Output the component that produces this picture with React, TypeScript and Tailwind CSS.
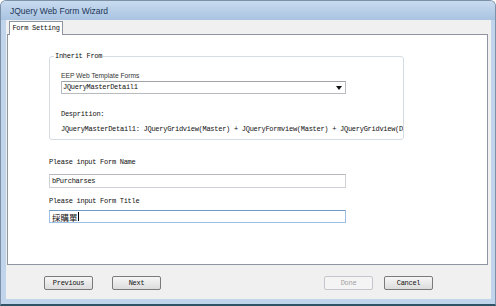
import React from 'react'

const mono = "font-['Liberation_Mono','DejaVu_Sans_Mono',monospace] text-[7px] tracking-[-0.27px] leading-[9px] text-[#111]"

function WizButton({ label, disabled }: { label: string; disabled?: boolean }) {
  return (
    <div
      className={
        'w-[49px] h-[14px] flex items-center justify-center rounded-[2px] border ' +
        (disabled
          ? 'border-[#c3c7cb] bg-[#f4f4f4] text-[#a3a3a3]'
          : 'border-[#7a7a7a] bg-gradient-to-b from-[#f6f6f6] to-[#dcdcdc] text-[#111]')
      }
    >
      <span className="font-['Liberation_Mono','DejaVu_Sans_Mono',monospace] text-[7px] tracking-[-0.27px] leading-[9px]">
        {label}
      </span>
    </div>
  )
}

export default function App() {
  return (
    <div className="w-[496px] h-[306px] flex flex-col bg-[#c0d5ec] border border-[#7d91a8] border-b-2 border-b-[#2f5468] rounded-t-[6px] overflow-hidden">
      {/* title bar */}
      <div className="h-[19px] flex items-center pl-[9px] pt-[2px] bg-gradient-to-b from-[#c9dbef] to-[#a8c3e1]">
        <span className="font-['Liberation_Sans',Arial,sans-serif] text-[8.5px] text-[#1d3657]">
          JQuery Web Form Wizard
        </span>
      </div>

      {/* client area */}
      <div className="ml-[5px] mr-[4px] h-[279px] bg-[#f0f0f0] flex flex-col">
        {/* tab strip */}
        <div className="h-[14px] flex items-start pl-[3px]">
          <div className="relative z-10 mt-[1px] h-[14px] w-[54px] bg-white border border-b-0 border-[#8e959e] flex items-center justify-center">
            <span className={mono}>Form Setting</span>
          </div>
        </div>

        {/* tab page */}
        <div className="ml-[1px] w-[481px] h-[231px] bg-white border border-[#8e959e] pl-[41px] pt-[21px] flex flex-col">
          {/* group box */}
          <div className="relative w-[355px] h-[84px] border border-[#d5dde3] rounded-[3px] pl-[11px] pt-[14px] flex flex-col">
            <span className={'absolute -top-[5px] left-[4px] bg-white px-[1px] ' + mono}>Inherit From</span>
            <span className="font-['Liberation_Sans',Arial,sans-serif] text-[6.7px] leading-[9px] text-[#333]">
              EEP Web Template Forms
            </span>
            <div className="mt-[1px] w-[285px] h-[13px] border border-[#b7babf] border-t-[#9fa3a8] bg-white flex items-center pl-[1px] pr-[3px]">
              <span className={'flex-1 ' + mono}>JQueryMasterDetail1</span>
              <svg width="6" height="4" viewBox="0 0 6 4">
                <path d="M0 0 H6 L3 4 Z" fill="#111" />
              </svg>
            </div>
            <span className={'mt-[16px] ' + mono}>Desprition:</span>
            <div className={'mt-[6px] overflow-hidden whitespace-nowrap ' + mono}>
              JQueryMasterDetail1: JQueryGridview(Master) + JQueryFormview(Master) + JQueryGridview(Detail)
            </div>
          </div>

          <span className={'mt-[18px] ' + mono}>Please input Form Name</span>
          <div className="mt-[7px] w-[297px] h-[14px] border border-[#cfd1d6] border-t-[#b4b7bc] bg-white flex items-center pl-[2px]">
            <span className={mono}>bPurcharses</span>
          </div>

          <span className={'mt-[9px] ' + mono}>Please input Form Title</span>
          <div className="mt-[4px] w-[297px] h-[13px] border border-[#9dbfe3] border-t-[#6f99c6] bg-white flex items-center pl-[2px]">
            <span className="font-['Noto_Sans_CJK_TC','Noto_Sans_CJK_SC',sans-serif] text-[8.5px] leading-[10px] text-[#111]">
              採購單
            </span>
            <span className="w-px h-[9px] bg-black" />
          </div>
        </div>

        {/* buttons */}
        <div className="mt-[11px] flex items-center pl-[38px]">
          <WizButton label="Previous" />
          <div className="ml-[19px]">
            <WizButton label="Next" />
          </div>
          <div className="ml-[163px]">
            <WizButton label="Done" disabled />
          </div>
          <div className="ml-[11px]">
            <WizButton label="Cancel" />
          </div>
        </div>
      </div>
    </div>
  )
}
